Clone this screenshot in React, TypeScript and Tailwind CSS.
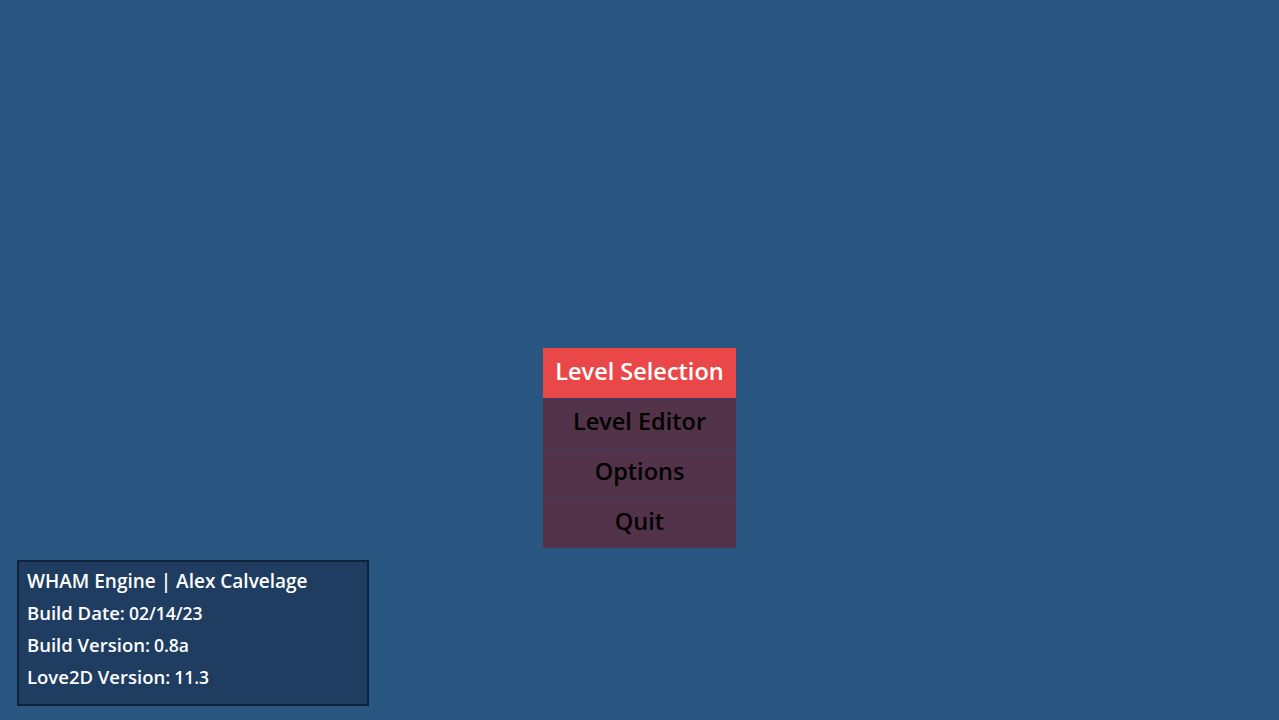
const font = { fontFamily: '"Open Sans", "Noto Sans", sans-serif' };

const items = ["Level Selection", "Level Editor", "Options", "Quit"];

function MenuButton({ label, active }: { label: string; active: boolean }) {
  return (
    <div
      className={`flex h-[50px] items-center justify-center pb-[3px] text-[23.5px] font-semibold ${
        active ? "bg-[#ea4848] text-white" : "border-t border-[#3b3f63] bg-[#533349] text-black"
      }`}
    >
      {label}
    </div>
  );
}

function InfoLine({ label, value }: { label: string; value?: string }) {
  return (
    <div
      className={`flex h-[32px] items-center font-semibold text-white ${
        value ? "text-[18.5px]" : "text-[19px]"
      }`}
    >
      <span>{label}</span>
      {value && <span className="ml-[4px] text-[17.5px]">{value}</span>}
    </div>
  );
}

export default function App() {
  return (
    <div className="flex h-[720px] w-full flex-col bg-[#2a5682] pt-[348px]" style={font}>
      <div className="mx-auto flex w-[193px] flex-col">
        {items.map((label, i) => (
          <MenuButton key={label} label={label} active={i === 0} />
        ))}
      </div>
      <div className="ml-[17px] mt-[12px] flex h-[146px] w-[352px] flex-col border-2 border-[#10213a] bg-[#1e3d60] px-[8px] pt-[3px]">
        <InfoLine label="WHAM Engine | Alex Calvelage" />
        <InfoLine label="Build Date:" value="02/14/23" />
        <InfoLine label="Build Version:" value="0.8a" />
        <InfoLine label="Love2D Version:" value="11.3" />
      </div>
    </div>
  );
}
